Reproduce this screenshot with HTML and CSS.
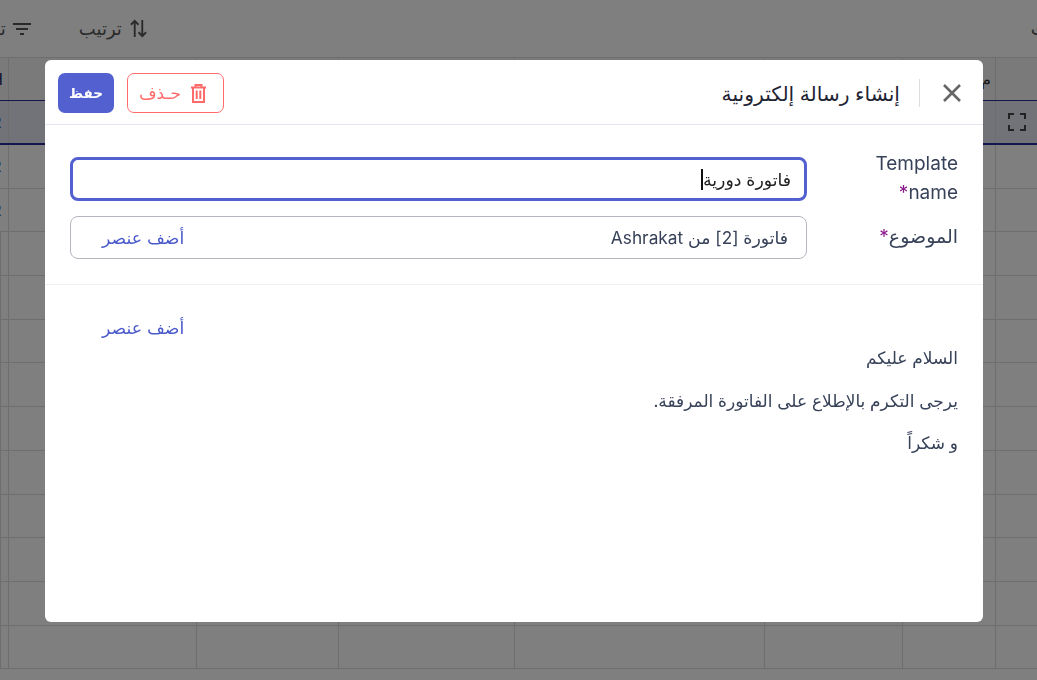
FILE: index.html
```html
<!DOCTYPE html>
<html lang="ar" dir="rtl">
<head>
<meta charset="utf-8">
<title>إنشاء رسالة إلكترونية</title>
<link rel="stylesheet" href="styles.css">
</head>
<body>
<div class="page">
  <div class="toolbar">
    <span class="tool-far">بحث</span>
    <div class="tools">
      <span class="tool">
        <svg class="sort-icon" viewBox="0 0 18 20"><path d="M5 19V2M1 6l4-4 4 4M13 1v17M9 14l4 4 4-4"/></svg>
        ترتيب
      </span>
      <span class="tool tool-filter">
        <svg class="tool-icon" viewBox="0 0 24 24"><path d="M10 18h4v-2h-4v2zM3 6v2h18V6H3zm3 7h12v-2H6v2z"/></svg>
        تصفية
      </span>
    </div>
  </div>
  <div class="grid">
    <div class="row row-head">
      <span class="cell"></span><span class="cell cell-mark">م</span><span class="cell"></span><span class="cell"></span><span class="cell"></span><span class="cell"></span><span class="cell"></span><span class="cell cell-end">H</span>
    </div>
    <div class="row row-active">
      <span class="cell cell-icon"><svg class="expand" viewBox="0 0 18 18"><path d="M1 6V1h5M12 1h5v5M17 12v5h-5M6 17H1v-5"/></svg></span><span class="cell"></span><span class="cell"></span><span class="cell"></span><span class="cell"></span><span class="cell"></span><span class="cell"></span><span class="cell cell-end">R</span>
    </div>
    <div class="row"><span class="cell"></span><span class="cell"></span><span class="cell"></span><span class="cell"></span><span class="cell"></span><span class="cell"></span><span class="cell"></span><span class="cell cell-end">R</span></div>
    <div class="row"><span class="cell"></span><span class="cell"></span><span class="cell"></span><span class="cell"></span><span class="cell"></span><span class="cell"></span><span class="cell"></span><span class="cell cell-end">R</span></div>
    <div class="row"><span class="cell"></span><span class="cell"></span><span class="cell"></span><span class="cell"></span><span class="cell"></span><span class="cell"></span><span class="cell"></span><span class="cell"></span></div>
    <div class="row"><span class="cell"></span><span class="cell"></span><span class="cell"></span><span class="cell"></span><span class="cell"></span><span class="cell"></span><span class="cell"></span><span class="cell"></span></div>
    <div class="row"><span class="cell"></span><span class="cell"></span><span class="cell"></span><span class="cell"></span><span class="cell"></span><span class="cell"></span><span class="cell"></span><span class="cell"></span></div>
    <div class="row"><span class="cell"></span><span class="cell"></span><span class="cell"></span><span class="cell"></span><span class="cell"></span><span class="cell"></span><span class="cell"></span><span class="cell"></span></div>
    <div class="row"><span class="cell"></span><span class="cell"></span><span class="cell"></span><span class="cell"></span><span class="cell"></span><span class="cell"></span><span class="cell"></span><span class="cell"></span></div>
    <div class="row"><span class="cell"></span><span class="cell"></span><span class="cell"></span><span class="cell"></span><span class="cell"></span><span class="cell"></span><span class="cell"></span><span class="cell"></span></div>
    <div class="row"><span class="cell"></span><span class="cell"></span><span class="cell"></span><span class="cell"></span><span class="cell"></span><span class="cell"></span><span class="cell"></span><span class="cell"></span></div>
    <div class="row"><span class="cell"></span><span class="cell"></span><span class="cell"></span><span class="cell"></span><span class="cell"></span><span class="cell"></span><span class="cell"></span><span class="cell"></span></div>
    <div class="row"><span class="cell"></span><span class="cell"></span><span class="cell"></span><span class="cell"></span><span class="cell"></span><span class="cell"></span><span class="cell"></span><span class="cell"></span></div>
    <div class="row"><span class="cell"></span><span class="cell"></span><span class="cell"></span><span class="cell"></span><span class="cell"></span><span class="cell"></span><span class="cell"></span><span class="cell"></span></div>
  </div>
</div>

<div class="overlay">
  <div class="modal">
    <header class="modal-head">
      <div class="head-title">
        <svg class="close" viewBox="0 0 20 20"><path d="M2 2l16 16M18 2 2 18"/></svg>
        <span class="divider"></span>
        <h1 class="title">إنشاء رسالة إلكترونية</h1>
      </div>
      <div class="head-actions">
        <button class="btn btn-delete" type="button">
          <svg class="trash" viewBox="0 0 15 19"><path d="M0 3.5h15M4.5 3.5V1h6v2.5M2 3.5V18h11V3.5M5.7 6.5v8.5M9.3 6.5v8.5"/></svg>
          حـذف
        </button>
        <button class="btn btn-save" type="button">حفظ</button>
      </div>
    </header>
    <section class="form">
      <div class="field">
        <label class="label">Template name<span class="req">*</span></label>
        <div class="input input-focus"><span class="value">فاتورة دورية</span><span class="caret"></span></div>
      </div>
      <div class="field field-subject">
        <label class="label">الموضوع<span class="req">*</span></label>
        <div class="input input-subject"><span class="value">فاتورة [2] من Ashrakat</span><a class="add-link">أضف عنصر</a></div>
      </div>
    </section>
    <section class="body">
      <a class="add-link add-body">أضف عنصر</a>
      <p class="line line-first">السلام عليكم</p>
      <p class="line">يرجى التكرم بالإطلاع على الفاتورة المرفقة.</p>
      <p class="line">و شكراً</p>
    </section>
  </div>
</div>
</body>
</html>
```
FILE: styles.css
```css
* { box-sizing: border-box; }
html, body { margin: 0; height: 100%; }
body {
  width: 1037px;
  height: 680px;
  overflow: hidden;
  background: #fff;
  font-family: Inter, "Noto Sans", "DejaVu Sans", sans-serif;
  color: #2d3748;
}
.page { width: 1037px; height: 680px; overflow: hidden; }
.toolbar {
  height: 57px;
  display: flex;
  align-items: center;
  justify-content: space-between;
  font-size: 18px;
  color: #555;
  background: #fff;
}
.tool-far { margin-right: -28px; }
.tools { display: flex; align-items: center; gap: 45px; margin-left: -39px; }
.tool { display: flex; align-items: center; gap: 8px; }
.tool-filter { gap: 4px; }
.tool-icon { width: 24px; height: 24px; fill: #555; }
.sort-icon { width: 17px; height: 19px; fill: none; stroke: #555; stroke-width: 2; }
.grid { display: flex; flex-direction: column; }
.row {
  display: grid;
  grid-template-columns: 42px 93px 138px 250px 176px 142px 188px 8px;
  height: 43.7px;
  border-bottom: 1px solid #ddd;
}
.row-head { height: 44px; border-bottom: 1px solid #2a2a9a; background: #f4f4f5; border-top: 1px solid #ddd; }
.row-active { height: 44px; border-bottom: 2px solid #2a2a9a; background: #e4e6f3; }
.cell { border-left: 1px solid #ddd; font-size: 16px; line-height: 43px; overflow: hidden; }
.cell-end { border-left: 0; direction: ltr; text-indent: -9px; color: #1a2a5a; }
.cell-mark { direction: ltr; text-align: left; text-indent: 78px; color: #333; }
.cell-icon { display: flex; align-items: center; justify-content: center; }
.expand { width: 18px; height: 18px; fill: none; stroke: #444; stroke-width: 2; }

.overlay {
  position: fixed;
  inset: 0;
  background: rgba(0, 0, 0, .5);
  display: flex;
  justify-content: center;
  padding-top: 60px;
  padding-right: 54px;
  padding-left: 45px;
}
.modal {
  width: 938px;
  height: 562px;
  background: #fff;
  border-radius: 6px;
  display: flex;
  flex-direction: column;
}
.modal-head {
  height: 65px;
  flex: none;
  padding: 2px 21px 0 13px;
  border-bottom: 1px solid #e5e5ee;
  display: flex;
  align-items: center;
  justify-content: space-between;
}
.head-title { display: flex; align-items: center; }
.close { width: 20px; height: 20px; fill: none; stroke: #666; stroke-width: 2.6; }
.divider { width: 1px; height: 28px; background: #ddd; margin: 0 22px 0 19px; }
.title { margin: 0; font-size: 20.25px; font-weight: 500; color: #1f2433; }
.head-actions { display: flex; gap: 13px; }
.btn {
  height: 40px;
  border-radius: 7px;
  font: inherit;
  display: flex;
  align-items: center;
  justify-content: center;
  padding: 0;
}
.btn-delete {
  width: 97px;
  gap: 10px;
  padding-right: 6px;
  background: #fff;
  border: 1px solid #ff6b6b;
  color: #ff6b6b;
  font-size: 17px;
}
.trash { width: 15px; height: 19px; fill: none; stroke: #ff6b6b; stroke-width: 2; }
.btn-save {
  width: 56px;
  background: #5360d0;
  border: 0;
  color: #fff;
  font-size: 13.5px;
  font-weight: 700;
}
.form {
  height: 160px;
  flex: none;
  padding: 24px 25px 0 0;
  border-bottom: 1px solid #f0f0f3;
}
.field { display: flex; align-items: flex-start; gap: 63px; }
.field-subject { margin-top: 9px; }
.label {
  width: 88px;
  flex: none;
  font-size: 19px;
  line-height: 29px;
  color: #374259;
}
.field-subject .label { padding-top: 6px; }
.req { color: #8a1a8a; }
.input {
  width: 737px;
  flex: none;
  border-radius: 8px;
  background: #fff;
  display: flex;
  align-items: center;
}
.input-focus {
  height: 44px;
  margin-top: 8px;
  border: 3px solid #5360d0;
  padding-right: 13px;
  font-size: 17.3px;
  color: #222;
}
.caret { width: 2px; height: 21px; background: #111; }
.input-subject {
  height: 43px;
  border: 1px solid #b5b5bd;
  padding: 0 18px 0 31px;
  justify-content: space-between;
  font-size: 17.3px;
  color: #374259;
}
.add-link { color: #4a5acb; font-size: 17.3px; }
.body { padding: 30px 25px 0; font-size: 17px; color: #374259; }
.add-body { display: block; text-align: left; padding-left: 32px; line-height: 26px; }
.line { margin: 0 0 17.5px; line-height: 25px; }
.line-first { margin-top: 5px; }
```
